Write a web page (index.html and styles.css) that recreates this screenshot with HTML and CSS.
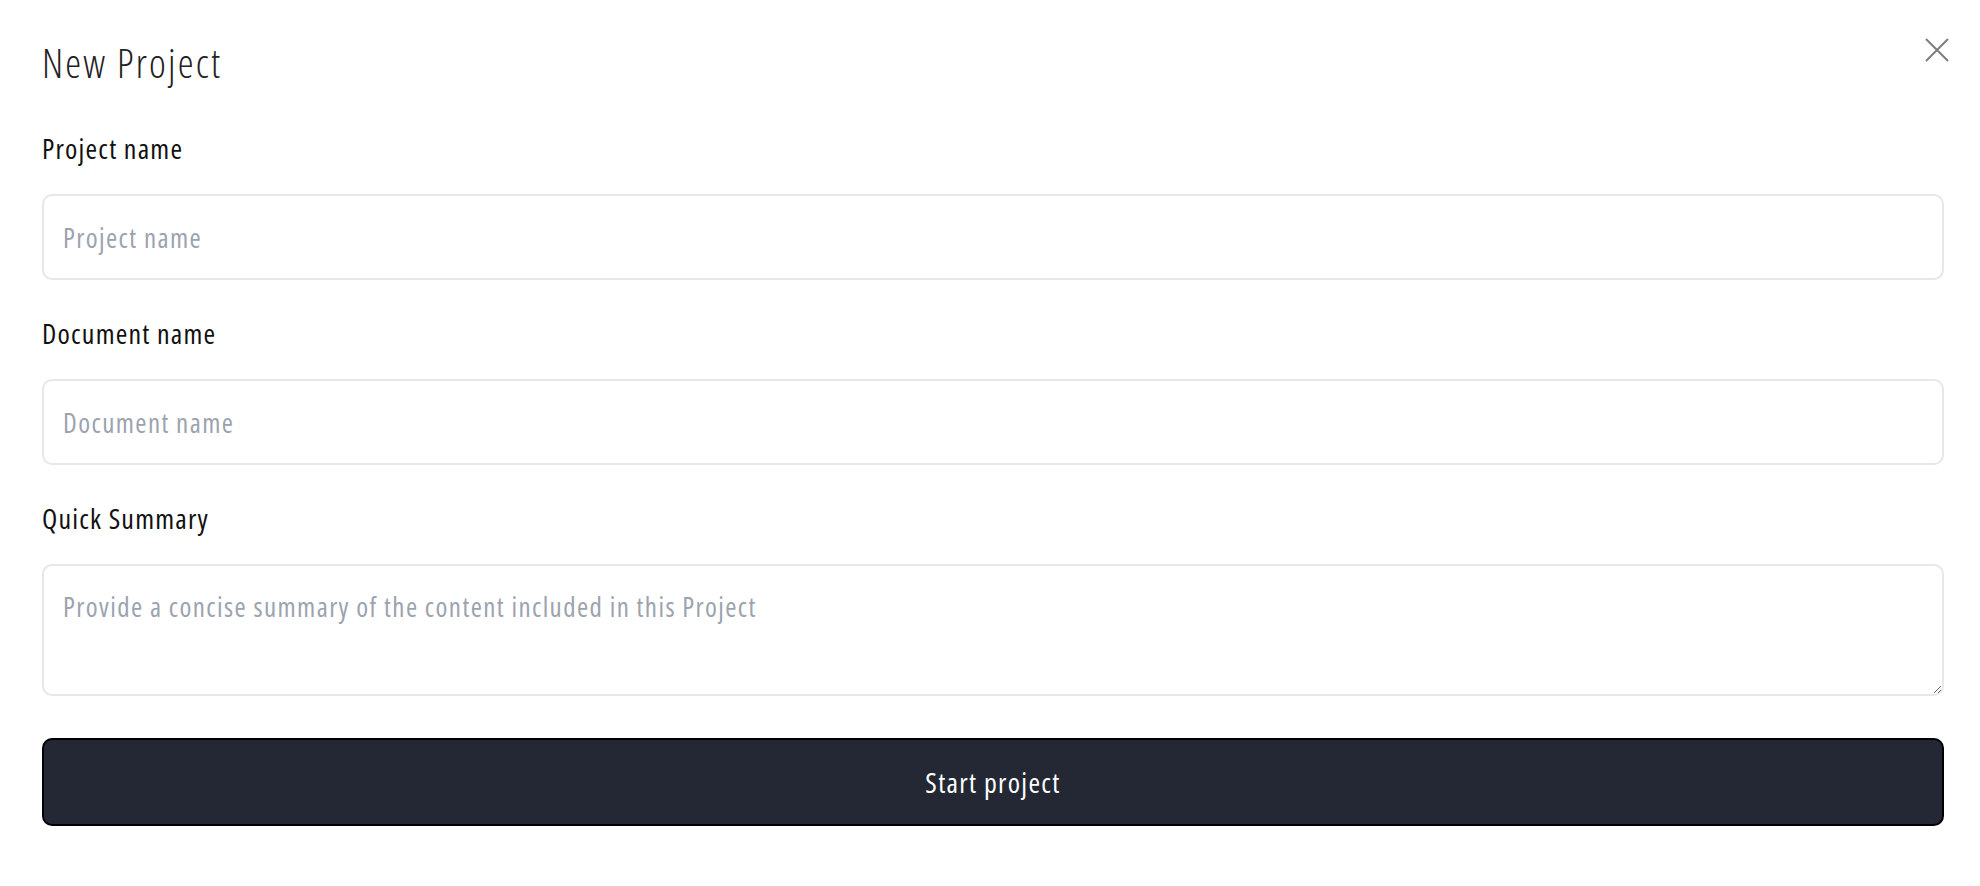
FILE: index.html
```html
<!DOCTYPE html>
<html lang="en">
<head>
    <meta charset="UTF-8">
    <meta name="viewport" content="width=device-width, initial-scale=1.0">
    <title>New Project</title>
    <link rel="stylesheet" href="styles.css">
</head>
<body>
    <div class="dialog">
        <div class="dialog-header">
            <h1>New Project</h1>
            <button class="close-button" aria-label="Close">
                <svg width="24" height="24" viewBox="0 0 24 24" fill="none" stroke="#7d7d7d" stroke-width="2">
                    <path d="M1 1L23 23M23 1L1 23"/>
                </svg>
            </button>
        </div>

        <form class="project-form">
            <label class="field-label" for="project-name">Project name</label>
            <input type="text" id="project-name" class="field-input" placeholder="Project name">

            <label class="field-label" for="document-name">Document name</label>
            <input type="text" id="document-name" class="field-input" placeholder="Document name">

            <label class="field-label" for="summary">Quick Summary</label>
            <textarea id="summary" class="field-input field-textarea" placeholder="Provide a concise summary of the content included in this Project"></textarea>

            <button type="button" class="start-button">Start project</button>
        </form>
    </div>
</body>
</html>
```

FILE: styles.css
```css
body {
    font-family: 'Open Sans', 'DejaVu Sans Condensed', sans-serif;
    font-stretch: 75%;
    background-color: #fff;
    color: #111;
    margin: 0;
}
.dialog {
    padding: 38px 36px 40px 42px;
}
.dialog-header {
    display: flex;
    justify-content: space-between;
    align-items: flex-start;
}
h1 {
    margin: 0;
    font-size: 40px;
    font-weight: 300;
    letter-spacing: 2.2px;
    line-height: 50px;
    color: #222;
}
.close-button {
    background: none;
    border: none;
    padding: 0;
    margin-right: -5px;
    width: 24px;
    height: 24px;
    cursor: pointer;
}
.close-button svg {
    display: block;
}
.project-form {
    display: flex;
    flex-direction: column;
    margin-top: 42px;
}
.field-label {
    font-size: 28px;
    line-height: 36px;
    letter-spacing: 1.2px;
    margin-bottom: 28px;
}
.field-input {
    box-sizing: border-box;
    height: 86px;
    padding: 0 19px;
    border: 2px solid #e5e7eb;
    border-radius: 10px;
    font-family: inherit;
    font-stretch: inherit;
    font-size: 27px;
    letter-spacing: 1.4px;
    color: #111;
    margin-bottom: 35px;
    outline: none;
}
.field-input::placeholder {
    color: #9ca3af;
}
.field-textarea {
    height: 132px;
    padding-top: 23px;
    line-height: 36px;
    margin-bottom: 42px;
    resize: vertical;
}
.start-button {
    height: 88px;
    background: #232834;
    color: #fff;
    border: 2px solid #000;
    border-radius: 10px;
    font-family: inherit;
    font-stretch: inherit;
    font-size: 28px;
    letter-spacing: 1.3px;
    cursor: pointer;
}
```
